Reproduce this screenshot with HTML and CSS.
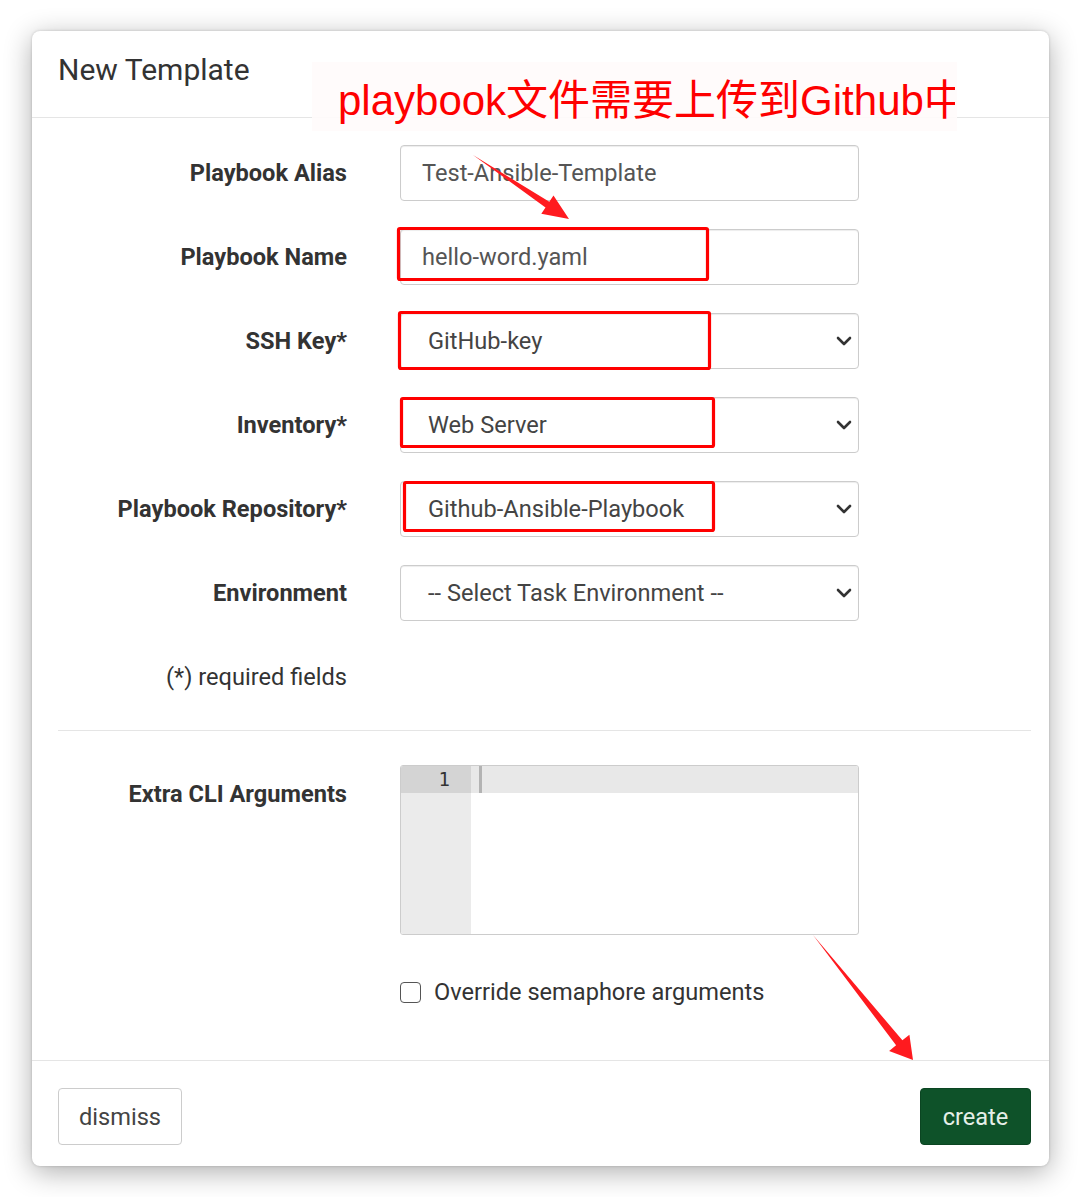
FILE: index.html
```html
<!DOCTYPE html>
<html lang="en">
<head>
<meta charset="utf-8">
<title>New Template</title>
<link rel="stylesheet" href="styles.css">
</head>
<body>
<div class="stage">
  <div class="modal">
    <div class="modal-header">
      <h4 class="modal-title">New Template</h4>
    </div>
    <div class="modal-body">
      <div class="form-grid">
        <label class="label">Playbook Alias</label>
        <div class="input">Test-Ansible-Template</div>

        <label class="label">Playbook Name</label>
        <div class="input">hello-word.yaml</div>

        <label class="label">SSH Key*</label>
        <div class="select"><span>GitHub-key</span>
          <svg class="chev" width="16" height="10" viewBox="0 0 16 10"><path d="M2 2 L8 8 L14 2" fill="none" stroke="#333" stroke-width="2.6" stroke-linecap="round" stroke-linejoin="round"/></svg>
        </div>

        <label class="label">Inventory*</label>
        <div class="select"><span>Web Server</span>
          <svg class="chev" width="16" height="10" viewBox="0 0 16 10"><path d="M2 2 L8 8 L14 2" fill="none" stroke="#333" stroke-width="2.6" stroke-linecap="round" stroke-linejoin="round"/></svg>
        </div>

        <label class="label">Playbook Repository*</label>
        <div class="select"><span>Github-Ansible-Playbook</span>
          <svg class="chev" width="16" height="10" viewBox="0 0 16 10"><path d="M2 2 L8 8 L14 2" fill="none" stroke="#333" stroke-width="2.6" stroke-linecap="round" stroke-linejoin="round"/></svg>
        </div>

        <label class="label">Environment</label>
        <div class="select"><span>-- Select Task Environment --</span>
          <svg class="chev" width="16" height="10" viewBox="0 0 16 10"><path d="M2 2 L8 8 L14 2" fill="none" stroke="#333" stroke-width="2.6" stroke-linecap="round" stroke-linejoin="round"/></svg>
        </div>

        <div class="label note">(*) required fields</div>
        <div></div>
      </div>

      <div class="divider"></div>

      <div class="form-grid extra">
        <label class="label top">Extra CLI Arguments</label>
        <div class="editor">
          <div class="gutter">
            <div class="gutter-line">1</div>
          </div>
          <div class="code">
            <div class="code-line"><span class="cursor"></span></div>
          </div>
        </div>
      </div>

      <div class="form-grid check-row">
        <div></div>
        <label class="check"><span class="box"></span><span>Override semaphore arguments</span></label>
      </div>
    </div>
    <div class="modal-footer">
      <button class="btn btn-default">dismiss</button>
      <button class="btn btn-create">create</button>
    </div>
  </div>

  <div class="note-banner"><div class="note-text">playbook文件需要上传到Github中</div></div>

  <svg class="marks" width="1080" height="1197" viewBox="0 0 1080 1197">
    <g fill="none" stroke="#ff0000" stroke-width="3.2">
      <rect x="398.5" y="228.5" width="309" height="51" rx="1.5"/>
      <rect x="399.5" y="312.5" width="310" height="56" rx="1.5"/>
      <rect x="401.5" y="398.5" width="312" height="48" rx="1.5"/>
      <rect x="404.5" y="482.5" width="309" height="48" rx="1.5"/>
    </g>
    <g fill="#ff1a1f">
      <polygon points="473,155 545.5,207.5 541.3,213.8 569,219 553.5,195.4 549.3,201.7"/>
      <polygon points="813,935 896.1,1045.3 889.1,1050.9 913,1060 909.4,1034.7 902.4,1040.3"/>
    </g>
  </svg>
</div>
</body>
</html>
```

FILE: styles.css
```css
html, body {
  margin: 0;
  padding: 0;
  background: #ffffff;
}

body {
  font-family: Roboto, "Liberation Sans", sans-serif;
  color: #333;
}

.stage {
  position: relative;
  width: 1080px;
  height: 1197px;
  box-sizing: border-box;
  padding: 31px 0 0 32px;
  overflow: hidden;
}

.modal {
  width: 1017px;
  background: #fff;
  border-radius: 8px;
  box-shadow: 0 6px 28px rgba(0, 0, 0, 0.32), 0 0 3px rgba(0, 0, 0, 0.18);
}

.modal-header {
  box-sizing: border-box;
  height: 87px;
  padding: 19px 26px 0;
  border-bottom: 1px solid #e5e5e5;
}

.modal-title {
  margin: 0;
  font-size: 30px;
  line-height: 40px;
  font-weight: 400;
  color: #333;
}

.modal-body {
  padding: 27px 18px 58px 26px;
}

.form-grid {
  display: grid;
  grid-template-columns: 289px 459px;
  column-gap: 53px;
  row-gap: 28px;
  grid-auto-rows: 56px;
}

.label {
  align-self: center;
  text-align: right;
  font-size: 23.6px;
  line-height: 28px;
  font-weight: 700;
  color: #333;
  white-space: nowrap;
}

.label.note {
  font-weight: 400;
}

.label.top {
  align-self: start;
  padding-top: 15px;
}

.input,
.select {
  box-sizing: border-box;
  height: 56px;
  border: 1px solid #ccc;
  border-radius: 4px;
  box-shadow: inset 0 1px 1px rgba(0, 0, 0, 0.075);
  font-size: 23.6px;
  color: #555;
  display: flex;
  align-items: center;
  white-space: nowrap;
}

.input {
  padding: 0 21px;
}

.select {
  padding: 0 6px 0 27px;
  justify-content: space-between;
  color: #444;
}

.chev {
  display: block;
}

.divider {
  height: 1px;
  background: #e5e5e5;
  margin-top: 25px;
}

.form-grid.extra {
  margin-top: 34px;
  grid-auto-rows: 170px;
}

.editor {
  box-sizing: border-box;
  height: 170px;
  border: 1px solid #ccc;
  border-radius: 3px;
  display: flex;
  overflow: hidden;
  background: #fff;
}

.gutter {
  width: 70px;
  background: #ebebeb;
  flex: none;
}

.gutter-line {
  height: 27px;
  background: #d4d4d4;
  font-family: "DejaVu Sans Mono", "Liberation Mono", monospace;
  font-size: 19px;
  line-height: 27px;
  text-align: right;
  padding-right: 21px;
  color: #333;
}

.code {
  flex: 1;
}

.code-line {
  height: 27px;
  background: #e8e8e8;
  padding-left: 8px;
}

.cursor {
  display: block;
  width: 3px;
  height: 27px;
  background: #b3b3b3;
}

.form-grid.check-row {
  margin-top: 47px;
  grid-auto-rows: 20px;
}

.check {
  display: flex;
  align-items: center;
  gap: 13px;
  font-size: 23.6px;
  color: #333;
  line-height: 20px;
  white-space: nowrap;
}

.box {
  box-sizing: border-box;
  width: 21px;
  height: 21px;
  border: 1.6px solid #555;
  border-radius: 4px;
  background: #fff;
  flex: none;
}

.modal-footer {
  display: flex;
  justify-content: space-between;
  align-items: center;
  padding: 27px 18px 21px 26px;
  border-top: 1px solid #e5e5e5;
}

.btn {
  box-sizing: border-box;
  height: 57px;
  font-family: Roboto, "Liberation Sans", sans-serif;
  font-size: 23.6px;
  border-radius: 4px;
  padding: 0 18px;
  cursor: pointer;
}

.btn-default {
  width: 124px;
  background: #fff;
  border: 1px solid #ccc;
  color: #444;
}

.btn-create {
  width: 111px;
  background: #0e5229;
  border: 1px solid #0b4522;
  color: #e6efe8;
}

.note-banner {
  position: absolute;
  left: 312px;
  top: 62px;
  width: 645px;
  height: 69px;
  background: rgba(255, 251, 251, 0.93);
  box-sizing: border-box;
  padding-left: 26px;
}

.note-text {
  width: 617px;
  overflow: hidden;
  white-space: nowrap;
  font-family: "Liberation Sans", "Noto Sans CJK SC", sans-serif;
  font-size: 42px;
  line-height: 69px;
  padding-top: 4px;
  color: #fe0000;
}

.marks {
  position: absolute;
  left: 0;
  top: 0;
  pointer-events: none;
}
```
